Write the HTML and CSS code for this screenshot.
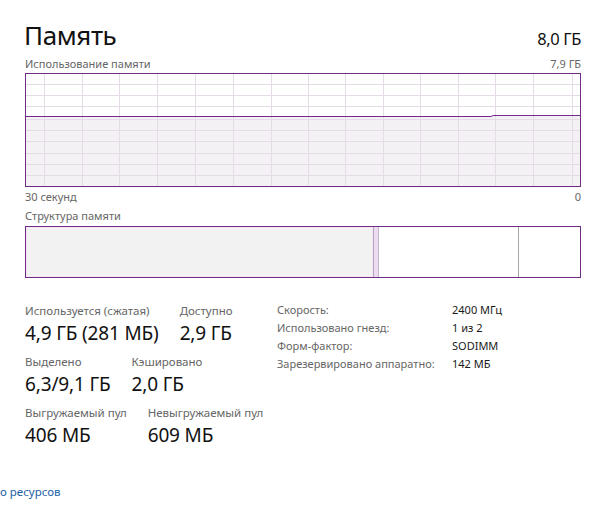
FILE: index.html
```html
<!DOCTYPE html>
<html lang="ru">
<head>
<meta charset="utf-8">
<title>Память</title>
<link rel="stylesheet" href="styles.css">
</head>
<body>
<div class="page">
  <div class="header">
    <h1 class="title">Память</h1>
    <span class="total">8,0 ГБ</span>
  </div>
  <div class="caption-row caption-top">
    <span>Использование памяти</span>
    <span>7,9 ГБ</span>
  </div>
  <div class="graph">
    <svg width="556" height="114" viewBox="0 0 556 114">
      <polygon class="area" points="1,43.5 466,43.5 468,42.5 555,42.5 555,113 1,113"/>
      <g class="grid">
        <line x1="19.5" y1="1" x2="19.5" y2="113"/>
        <line x1="57.5" y1="1" x2="57.5" y2="113"/>
        <line x1="94.5" y1="1" x2="94.5" y2="113"/>
        <line x1="132.5" y1="1" x2="132.5" y2="113"/>
        <line x1="170.5" y1="1" x2="170.5" y2="113"/>
        <line x1="208.5" y1="1" x2="208.5" y2="113"/>
        <line x1="246.5" y1="1" x2="246.5" y2="113"/>
        <line x1="283.5" y1="1" x2="283.5" y2="113"/>
        <line x1="320.5" y1="1" x2="320.5" y2="113"/>
        <line x1="358.5" y1="1" x2="358.5" y2="113"/>
        <line x1="395.5" y1="1" x2="395.5" y2="113"/>
        <line x1="433.5" y1="1" x2="433.5" y2="113"/>
        <line x1="470.5" y1="1" x2="470.5" y2="113"/>
        <line x1="508.5" y1="1" x2="508.5" y2="113"/>
        <line x1="547.5" y1="1" x2="547.5" y2="113"/>
        <line x1="1" y1="11.5" x2="555" y2="11.5"/>
        <line x1="1" y1="22.5" x2="555" y2="22.5"/>
        <line x1="1" y1="33.5" x2="555" y2="33.5"/>
        <line x1="1" y1="46.5" x2="555" y2="46.5"/>
        <line x1="1" y1="57.5" x2="555" y2="57.5"/>
        <line x1="1" y1="68.5" x2="555" y2="68.5"/>
        <line x1="1" y1="80.5" x2="555" y2="80.5"/>
        <line x1="1" y1="91.5" x2="555" y2="91.5"/>
        <line x1="1" y1="102.5" x2="555" y2="102.5"/>
      </g>
      <polyline class="usage" points="1,43.5 466,43.5 468,42.5 555,42.5"/>
      <rect class="frame" x="0.5" y="0.5" width="555" height="113"/>
    </svg>
  </div>
  <div class="caption-row caption-axis">
    <span>30 секунд</span>
    <span>0</span>
  </div>
  <div class="caption caption-struct">Структура памяти</div>
  <div class="composition">
    <div class="seg seg-used"></div>
    <div class="seg seg-mod"></div>
    <div class="seg seg-standby"></div>
    <div class="seg seg-free"></div>
  </div>
  <div class="stats">
    <div class="stats-left">
      <div class="stat-row">
        <div class="stat"><div class="label">Используется (сжатая)</div><div class="value">4,9 ГБ (281 МБ)</div></div>
        <div class="stat"><div class="label">Доступно</div><div class="value">2,9 ГБ</div></div>
      </div>
      <div class="stat-row">
        <div class="stat"><div class="label">Выделено</div><div class="value">6,3/9,1 ГБ</div></div>
        <div class="stat"><div class="label">Кэшировано</div><div class="value">2,0 ГБ</div></div>
      </div>
      <div class="stat-row">
        <div class="stat"><div class="label">Выгружаемый пул</div><div class="value">406 МБ</div></div>
        <div class="stat"><div class="label">Невыгружаемый пул</div><div class="value">609 МБ</div></div>
      </div>
    </div>
    <div class="stats-right">
      <span class="k">Скорость:</span><span class="v">2400 МГц</span>
      <span class="k">Использовано гнезд:</span><span class="v">1 из 2</span>
      <span class="k">Форм-фактор:</span><span class="v">SODIMM</span>
      <span class="k">Зарезервировано аппаратно:</span><span class="v">142 МБ</span>
    </div>
  </div>
</div>
<a class="monitor-link" href="#">о ресурсов</a>
</body>
</html>
```
FILE: styles.css
```css
* { box-sizing: border-box; }
html, body { margin: 0; padding: 0; background: #ffffff; }
body {
  font-family: "Noto Sans", "Open Sans", sans-serif;
  color: #1a1a1a;
  width: 596px;
  height: 505px;
  overflow: hidden;
}
.page {
  padding: 19px 15px 0 25px;
}
.header {
  display: flex;
  justify-content: space-between;
  align-items: baseline;
  height: 37px;
}
.title {
  margin: 0;
  margin-left: -1px;
  font-size: 26px;
  letter-spacing: -0.4px;
  font-weight: 400;
  line-height: 32px;
  color: #111;
}
.total {
  font-size: 16.5px;
  letter-spacing: -0.4px;
  color: #111;
}
.caption-row {
  display: flex;
  justify-content: space-between;
  font-size: 11px;
  line-height: 16px;
  color: #666;
}
.caption {
  font-size: 11px;
  line-height: 16px;
  color: #666;
}
.caption-top { margin-top: 0; }
.graph {
  margin-top: 1px;
  height: 114px;
}
.graph svg { display: block; }
.area { fill: #f4f1f4; }
.grid line { stroke: #e4dbe6; stroke-width: 1; }
.usage { fill: none; stroke: #742a8a; stroke-width: 1; }
.frame { fill: none; stroke: #6e2d80; stroke-width: 1; }
.caption-axis { margin-top: 2px; }
.caption-struct { margin-top: 3px; }
.composition {
  margin-top: 2px;
  height: 52px;
  border: 1px solid #6e2d80;
  display: flex;
}
.seg { height: 100%; }
.seg-used {
  flex: 0 0 347px;
  background: #f2f2f2;
  border: 1px solid #f6e7f8;
}
.seg-mod {
  flex: 0 0 6px;
  background: #ecdcf0;
  border-left: 1px solid #b9a5c0;
  border-right: 1px solid #c7b3cd;
}
.seg-standby {
  flex: 0 0 140px;
  background: #ffffff;
  border-right: 1px solid #a6a6a6;
}
.seg-free {
  flex: 1 1 auto;
  background: #ffffff;
}
.stats {
  display: flex;
  margin-top: 23px;
}
.stats-left {
  width: 252px;
  padding-top: 2px;
  display: flex;
  flex-direction: column;
  gap: 8px;
}
.stat-row {
  display: flex;
  gap: 21px;
}
.label {
  font-size: 11.5px;
  line-height: 16px;
  color: #666;
}
.value {
  margin-top: 1px;
  font-size: 19px;
  letter-spacing: -0.15px;
  line-height: 26px;
  color: #111;
}
.stats-right {
  display: grid;
  grid-template-columns: 175px auto;
  grid-auto-rows: 18px;
  font-size: 11px;
  line-height: 18px;
}
.stats-right .k { color: #666; }
.stats-right .v { color: #1a1a1a; }
.monitor-link {
  display: block;
  margin-top: 36px;
  padding-left: 0;
  font-size: 11.5px;
  line-height: 16px;
  color: #1c5fa8;
  text-decoration: none;
}
```
